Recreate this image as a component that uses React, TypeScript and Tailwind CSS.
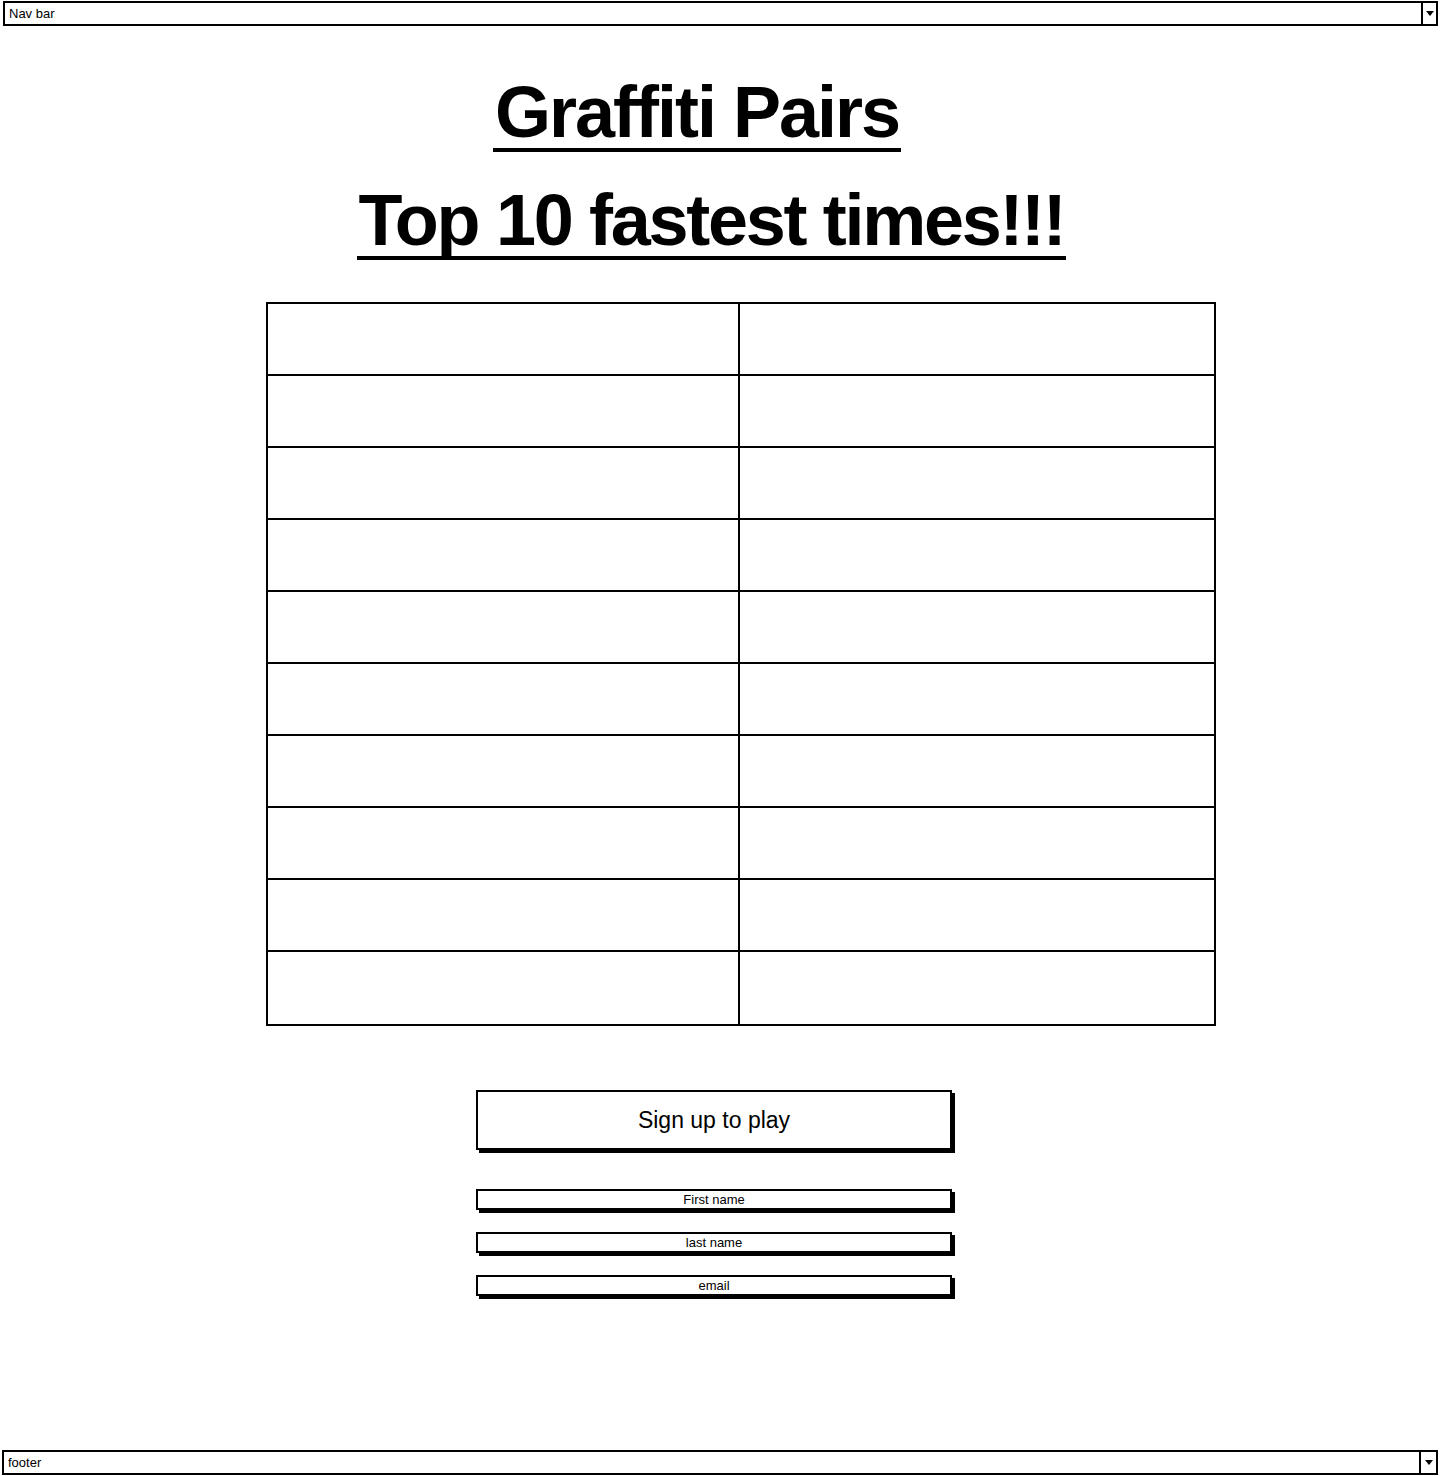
const sans = { fontFamily: '"Liberation Sans", Arial, sans-serif' };

// dropdown style bar used for the nav and the footer
function Bar({ label, className, arrowW }: { label: string; className?: string; arrowW: string }) {
  return (
    <div className={`flex h-[25px] border-2 border-black bg-white ${className ?? ''}`}>
      <div className="flex flex-1 items-center pl-[4px] text-[13px] leading-none text-black">{label}</div>
      <div className={`flex ${arrowW} items-center justify-center border-l-2 border-black`}>
        <span className="h-0 w-0 border-x-[4px] border-t-[5px] border-x-transparent border-t-black" />
      </div>
    </div>
  );
}

function Field({ label }: { label: string }) {
  return (
    <div className="flex h-[21px] w-[476px] items-center justify-center border-2 border-black bg-white text-[13px] leading-none text-black shadow-[3px_3px_0_#000]">
      {label}
    </div>
  );
}

export default function App() {
  const rows = Array.from({ length: 10 }, (_, i) => i);

  return (
    <div className="flex min-h-[1476px] flex-col bg-white" style={sans}>
      <Bar label="Nav bar" arrowW="w-[15px]" className="mx-[3px] mt-[1px]" />

      <div className="flex flex-col items-center">
        {/* Headings */}
        <h1 className="mt-[50px] mr-[47px] inline-block border-b-4 border-black px-[2px] text-[72px] font-bold leading-none tracking-[-2px] text-black">
          Graffiti Pairs
        </h1>
        <h2 className="mt-[32px] mr-[18px] inline-block border-b-4 border-black px-[2px] text-[72px] font-bold leading-none tracking-[-2.3px] text-black">
          Top 10 fastest times!!!
        </h2>

        {/* Leaderboard */}
        <div className="mt-[42px] ml-[41px] w-[950px] border-2 border-black">
          {rows.map((i) => (
            <div
              key={i}
              className={`flex ${i > 0 ? 'border-t-2 border-black' : ''} ${
                i === 0 ? 'h-[70px]' : i === 9 ? 'h-[74px]' : 'h-[72px]'
              }`}
            >
              <div className="w-[472px] border-r-2 border-black" />
              <div className="flex-1" />
            </div>
          ))}
        </div>

        {/* Sign up */}
        <button className="mt-[64px] mr-[13px] flex h-[60px] w-[476px] items-center justify-center border-2 border-black bg-white text-[23px] text-black shadow-[3px_3px_0_#000]">
          Sign up to play
        </button>

        <div className="mt-[39px] mr-[13px] flex flex-col gap-[22px]">
          <Field label="First name" />
          <Field label="last name" />
          <Field label="email" />
        </div>
      </div>

      <Bar label="footer" arrowW="w-[17px]" className="mt-auto mb-[1px] ml-[2px] mr-[3px]" />
    </div>
  );
}
